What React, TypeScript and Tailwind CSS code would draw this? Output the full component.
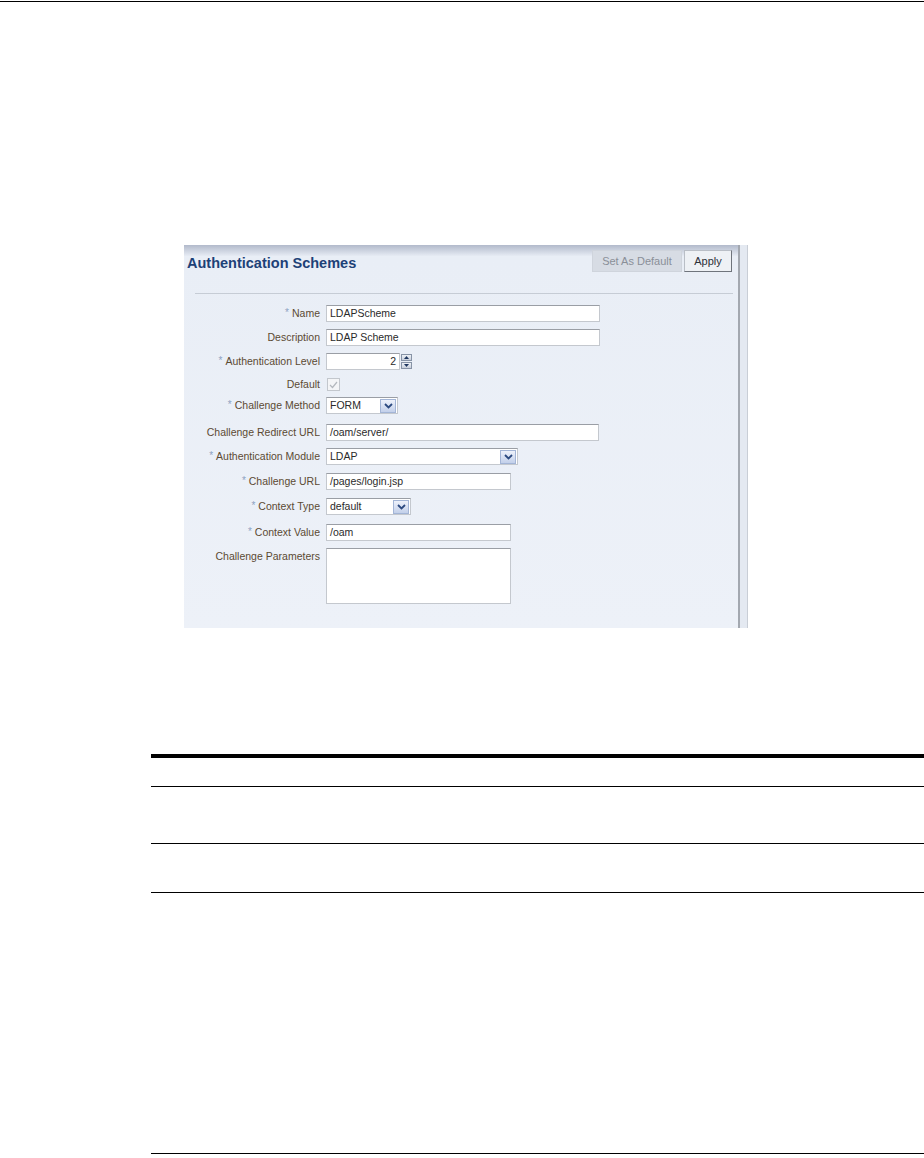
const rows = [
  { label: "Name", req: true, kind: "input", value: "LDAPScheme", w: "w-[274px]", mt: "mt-[11px]" },
  { label: "Description", req: false, kind: "input", value: "LDAP Scheme", w: "w-[274px]", mt: "mt-[7px]" },
  { label: "Authentication Level", req: true, kind: "spin", value: "2", w: "w-[74px]", mt: "mt-[7px]" },
  { label: "Default", req: false, kind: "check", value: "", w: "", mt: "mt-[8px]" },
  { label: "Challenge Method", req: true, kind: "select", value: "FORM", w: "w-[72px]", mt: "mt-[6px]" },
  { label: "Challenge Redirect URL", req: false, kind: "input", value: "/oam/server/", w: "w-[273px]", mt: "mt-[10px]" },
  { label: "Authentication Module", req: true, kind: "select", value: "LDAP", w: "w-[192px]", mt: "mt-[7px]" },
  { label: "Challenge URL", req: true, kind: "input", value: "/pages/login.jsp", w: "w-[185px]", mt: "mt-[8px]" },
  { label: "Context Type", req: true, kind: "select", value: "default", w: "w-[85px]", mt: "mt-[8px]" },
  { label: "Context Value", req: true, kind: "input", value: "/oam", w: "w-[185px]", mt: "mt-[9px]" },
];

const boxCls =
  "h-[17px] bg-white border border-[#c4c8ce] border-t-[#9a9ea5] flex items-center text-[10.5px] text-[#2a2a2a]";

const Chevron = () => (
  <svg width="9" height="6" viewBox="0 0 9 6">
    <path d="M1 1 L4.5 4.5 L8 1" fill="none" stroke="#2c4a80" strokeWidth="1.8" />
  </svg>
);

const Field = ({ row }) => {
  if (row.kind === "check") {
    return (
      <div className="ml-[1px] w-[13px] h-[13px] border border-[#c3c7cd] bg-[#f4f5f7] flex items-center justify-center">
        <svg width="9" height="8" viewBox="0 0 9 8">
          <path d="M1 4 L3.5 6.5 L8 1" fill="none" stroke="#b4b8be" strokeWidth="1.2" />
        </svg>
      </div>
    );
  }
  if (row.kind === "spin") {
    return (
      <div className="flex items-center gap-[1px]">
        <div className={`${boxCls} ${row.w} justify-end pr-[3px]`}>{row.value}</div>
        <div className="flex flex-col gap-[1px]">
          <div className="w-[11px] h-[7px] bg-gradient-to-b from-[#eef1f6] to-[#c9d0dc] border border-[#8793a6] flex items-center justify-center">
            <svg width="5" height="3" viewBox="0 0 5 3">
              <path d="M0 3 L2.5 0 L5 3 Z" fill="#1e355e" />
            </svg>
          </div>
          <div className="w-[11px] h-[7px] bg-gradient-to-b from-[#eef1f6] to-[#c9d0dc] border border-[#8793a6] flex items-center justify-center">
            <svg width="5" height="3" viewBox="0 0 5 3">
              <path d="M0 0 L2.5 3 L5 0 Z" fill="#1e355e" />
            </svg>
          </div>
        </div>
      </div>
    );
  }
  if (row.kind === "select") {
    return (
      <div className={`${boxCls} ${row.w} justify-between pl-[3px] pr-[1px]`}>
        <span>{row.value}</span>
        <div className="w-[16px] h-[14px] bg-gradient-to-b from-[#eef2fb] to-[#c3d0ea] border border-[#a3b5d6] flex items-center justify-center">
          <Chevron />
        </div>
      </div>
    );
  }
  return <div className={`${boxCls} ${row.w} pl-[3px]`}>{row.value}</div>;
};

const Label = ({ text, req }) => (
  <div className="w-[136px] text-right text-[10.5px] text-[#5b4a33] whitespace-nowrap leading-none">
    {req && <span className="text-[#8da2c2] text-[10px] align-top mr-[3px]">*</span>}
    {text}
  </div>
);

export default function App() {
  return (
    <div
      className="w-[924px] h-[1158px] bg-white overflow-hidden"
      style={{ fontFamily: '"Liberation Sans", Arial, sans-serif' }}
    >
      <div className="mt-[1px] h-px bg-black" />

      {/* screenshot panel */}
      <div className="mt-[243px] ml-[184px] w-[564px] h-[383px] flex bg-[#e9eef6]">
        <div className="w-[554px] flex flex-col bg-gradient-to-b from-[#b2bacb] via-[#e9eef6] via-[3%] to-[#edf1f8]">
          <div className="pt-[5px] pr-[6px] pl-[3px] flex justify-between items-start">
            <div className="mt-[5px] text-[14.5px] leading-[16px] font-bold text-[#1d4177]">
              Authentication Schemes
            </div>
            <div className="flex gap-[2px]">
              <div className="h-[22px] w-[90px] bg-[#d7dce4] border border-[#cfd4dc] text-[#8a8f98] text-[11px] flex items-center justify-center">
                Set As Default
              </div>
              <div className="h-[22px] w-[48px] bg-[#eef1f5] border border-[#b9bec6] border-r-[#6f747c] border-b-[#6f747c] text-[#2b3038] text-[11px] flex items-center justify-center">
                Apply
              </div>
            </div>
          </div>
          <div className="mt-[21px] ml-[11px] mr-[5px] h-px bg-[#c6ccd5]" />

          <div className="flex flex-col">
            {rows.map((row) => (
              <div key={row.label} className={`${row.mt} flex items-center gap-[6px]`}>
                <Label text={row.label} req={row.req} />
                <Field row={row} />
              </div>
            ))}
            <div className="mt-[7px] flex items-start gap-[6px]">
              <div className="pt-[3px]">
                <Label text="Challenge Parameters" req={false} />
              </div>
              <div className="w-[185px] h-[56px] bg-white border border-[#c4c8ce] border-t-[#9a9ea5]" />
            </div>
          </div>
        </div>
        <div className="w-[2px] bg-[#a3a8b0]" />
        <div className="flex-1 bg-[#e4e9f1] border-r border-[#c9ced6]" />
      </div>

      {/* table rules */}
      <div className="mt-[126px] ml-[151px] w-[773px] border-t-4 border-black">
        <div className="h-[29px] border-b border-black" />
        <div className="h-[57px] border-b border-black" />
        <div className="h-[49px] border-b border-black" />
        <div className="h-[261px] border-b border-black" />
      </div>
    </div>
  );
}
